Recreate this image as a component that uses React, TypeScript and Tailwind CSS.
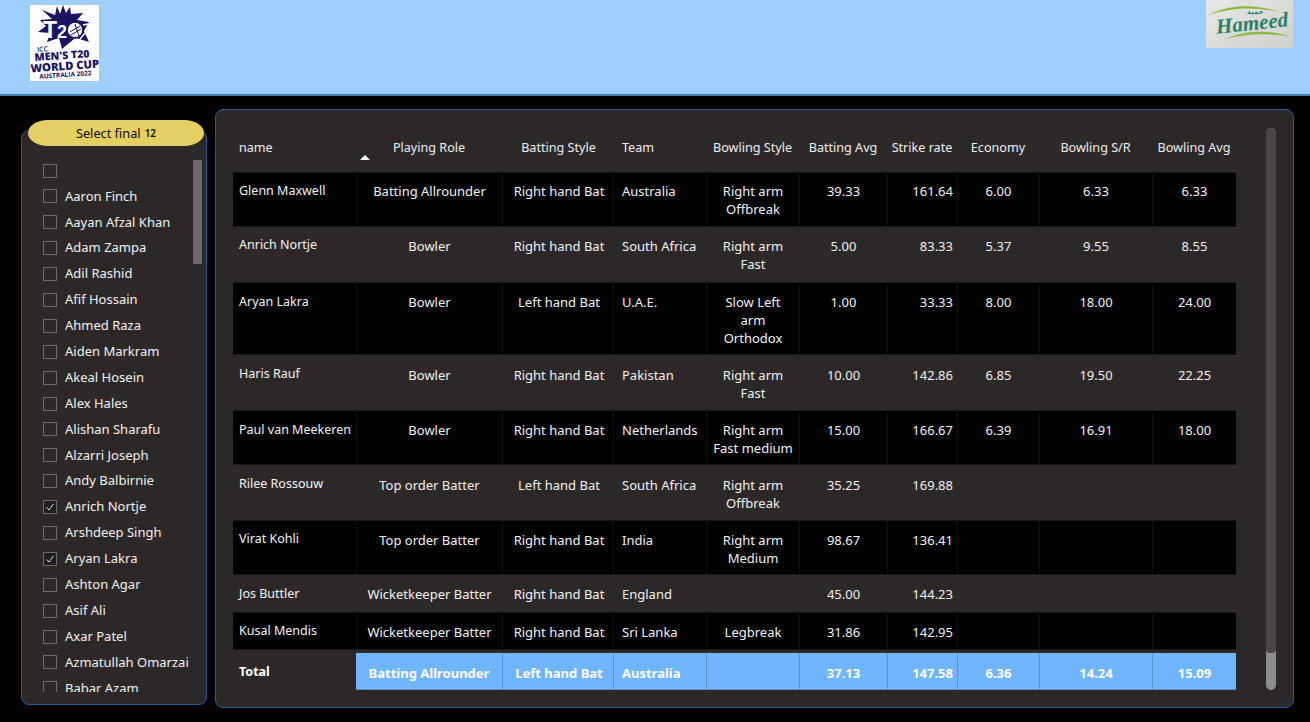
const grid = 'grid w-[1003px] grid-cols-[123px_146px_111px_93px_93px_88px_70px_82px_113px_84px]';

const players = [
  '',
  'Aaron Finch',
  'Aayan Afzal Khan',
  'Adam Zampa',
  'Adil Rashid',
  'Afif Hossain',
  'Ahmed Raza',
  'Aiden Markram',
  'Akeal Hosein',
  'Alex Hales',
  'Alishan Sharafu',
  'Alzarri Joseph',
  'Andy Balbirnie',
  'Anrich Nortje',
  'Arshdeep Singh',
  'Aryan Lakra',
  'Ashton Agar',
  'Asif Ali',
  'Axar Patel',
  'Azmatullah Omarzai',
  'Babar Azam',
];

const checked = ['Anrich Nortje', 'Aryan Lakra'];

const rows = [
  { h: 'h-[55px]', namePt: 'pt-[10px]', pt: 'pt-[10px]', cells: ['Glenn Maxwell', 'Batting Allrounder', 'Right hand Bat', 'Australia', 'Right arm\nOffbreak', '39.33', '161.64', '6.00', '6.33', '6.33'] },
  { h: 'h-[55px]', namePt: 'pt-[9px]', pt: 'pt-[10px]', cells: ['Anrich Nortje', 'Bowler', 'Right hand Bat', 'South Africa', 'Right arm\nFast', '5.00', '83.33', '5.37', '9.55', '8.55'] },
  { h: 'h-[73px]', namePt: 'pt-[11px]', pt: 'pt-[11px]', cells: ['Aryan Lakra', 'Bowler', 'Left hand Bat', 'U.A.E.', 'Slow Left\narm\nOrthodox', '1.00', '33.33', '8.00', '18.00', '24.00'] },
  { h: 'h-[55px]', namePt: 'pt-[10px]', pt: 'pt-[11px]', cells: ['Haris Rauf', 'Bowler', 'Right hand Bat', 'Pakistan', 'Right arm\nFast', '10.00', '142.86', '6.85', '19.50', '22.25'] },
  { h: 'h-[55px]', namePt: 'pt-[11px]', pt: 'pt-[11px]', cells: ['Paul van Meekeren', 'Bowler', 'Right hand Bat', 'Netherlands', 'Right arm\nFast medium', '15.00', '166.67', '6.39', '16.91', '18.00'] },
  { h: 'h-[55px]', namePt: 'pt-[10px]', pt: 'pt-[11px]', cells: ['Rilee Rossouw', 'Top order Batter', 'Left hand Bat', 'South Africa', 'Right arm\nOffbreak', '35.25', '169.88', '', '', ''] },
  { h: 'h-[55px]', namePt: 'pt-[10px]', pt: 'pt-[11px]', cells: ['Virat Kohli', 'Top order Batter', 'Right hand Bat', 'India', 'Right arm\nMedium', '98.67', '136.41', '', '', ''] },
  { h: 'h-[37px]', namePt: 'pt-[10px]', pt: 'pt-[10px]', cells: ['Jos Buttler', 'Wicketkeeper Batter', 'Right hand Bat', 'England', '', '45.00', '144.23', '', '', ''] },
  { h: 'h-[38px]', namePt: 'pt-[10px]', pt: 'pt-[11px]', cells: ['Kusal Mendis', 'Wicketkeeper Batter', 'Right hand Bat', 'Sri Lanka', 'Legbreak', '31.86', '142.95', '', '', ''] },
];

const headers = ['name', 'Playing Role', 'Batting Style', 'Team', 'Bowling Style', 'Batting Avg', 'Strike rate', 'Economy', 'Bowling S/R', 'Bowling Avg'];
const totals = ['Batting Allrounder', 'Left hand Bat', 'Australia', '', '37.13', '147.58', '6.36', '14.24', '15.09'];

// alignment per column
const align = [
  'text-left pl-[6px] text-[12.5px]',
  'text-center',
  'text-center pl-[2px]',
  'text-left pl-[8px]',
  'text-center',
  'text-center',
  'text-right pr-[4px]',
  'text-center',
  'text-center',
  'text-center',
];

const T20Logo = () => (
  <div className="w-[69px] h-[76px] bg-white relative overflow-hidden">
    <svg viewBox="0 0 69 46" className="w-[69px] h-[46px]">
      <polygon
        fill="#1b1464"
        points="27,1 30,9 33,0 36,8 40,2 41,9 53,8 47,15 59,17 54,26 59,37 43,32 44,34 32,44 29,33 17,37 20,28 8,27 16,21 10,15 22,14 12,5 25,10"
      />
      <text x="13" y="33" fontFamily="Liberation Sans, sans-serif" fontSize="23" fontWeight="700" fill="#fff">T</text>
      <text x="27" y="33" fontFamily="Liberation Sans, sans-serif" fontSize="18" fontWeight="700" fill="#fff">2</text>
      <circle cx="45" cy="25" r="8" fill="#fff" stroke="#1b1464" strokeWidth="1.6" />
      <path d="M40 27 L50 21 M41 30 L51 24 M45 19 L49 31" stroke="#1b1464" strokeWidth="1" />
      <path d="M53 20 L58 19 L56 27 L50 34" fill="none" stroke="#fff" strokeWidth="1.4" />
    </svg>
    <div className="absolute left-0 top-[40px] w-[69px] text-[#1b1464] font-['Open_Sans',sans-serif] font-extrabold -rotate-[4deg] whitespace-nowrap text-center">
      <div className="text-[7px] leading-[6px] font-semibold text-left pl-2">ICC</div>
      <div className="text-[10.5px] leading-[9px] -ml-1">MEN'S T20</div>
      <div className="text-[11.25px] leading-[11px]">WORLD CUP</div>
      <div className="text-[6.5px] leading-[8px] font-bold">AUSTRALIA 2022</div>
    </div>
  </div>
);

const HameedLogo = () => (
  <div className="w-[87px] h-[48px] bg-gradient-to-br from-[#e8e8e6] to-[#d0d0cd] relative overflow-hidden">
    <svg viewBox="0 0 87 48" className="absolute inset-0 w-full h-full">
      <path d="M2 15 C20 6 42 2 74 12 C44 6 24 8 2 15 Z" fill="#8db33c" />
      <path d="M19 39 C38 31 58 29 83 36 C58 33 38 34 19 39 Z" fill="#8db33c" />
    </svg>
    <div className="absolute left-[41px] top-[8px] font-['DejaVu_Sans',sans-serif] text-[7px] leading-[9px] font-bold text-[#2a7f6a]">حميد</div>
    <div className="absolute left-[8px] top-[11px] w-[76px] text-center font-['Liberation_Serif',serif] italic font-bold text-[21px] leading-[24px] text-[#2a7f6a] -rotate-6">
      Hameed
    </div>
  </div>
);

const Check = ({ on }: { on: boolean }) => (
  <span className={`w-[14px] h-[14px] shrink-0 border border-[#6f6b6b] flex items-center justify-center ${on ? 'bg-[#1f1d22]' : ''}`}>
    {on && (
      <svg viewBox="0 0 14 14" className="w-[14px] h-[14px]">
        <path d="M3 7.5 L5.8 10.5 L11 3.5" fill="none" stroke="#fff" strokeWidth="1" />
      </svg>
    )}
  </span>
);

const Slicer = () => (
  <div className="w-[186px] h-[575px] mt-[21px] shrink-0 bg-[#2d2828] border border-[#1c5c9c] rounded-lg relative">
    <div className="absolute left-[6px] top-[-11px] w-[176px] h-[26px] bg-[#e6cf62] rounded-[20px/13px] flex items-center justify-center pt-[1px] text-[#0c0c0c] text-[12.75px] font-['Noto_Sans',sans-serif]">
      Select final <span className="ml-1 text-[10px] font-semibold">12</span>
    </div>
    <div className="absolute right-[4px] top-[29px] w-[9px] h-[104px] bg-[#6e6868]" />
    <div className="h-[561px] pt-[26.6px] pl-[21px] overflow-hidden">
      {players.map(p => (
        <div key={p || 'blank'} className="h-[25.9px] flex items-center gap-[8px] text-[13px] text-[#f2f2f2] whitespace-nowrap">
          <Check on={checked.includes(p)} />
          <span>{p}</span>
        </div>
      ))}
    </div>
  </div>
);

const PlayerTable = () => (
  <div className="w-[1079px] h-[599px] shrink-0 bg-[#2d2828] border border-[#1c5c9c] rounded-lg relative pt-[20px] pl-[17px]">
    <div className={`${grid} h-[42px] text-[#eeeeee] text-[12.6px] relative`}>
      {headers.map((h, i) => (
        <div key={h} className={`${i === 0 ? 'text-left pl-[6px]' : i === 3 ? 'text-left pl-[9px]' : i === 2 ? 'text-center pl-[2px]' : 'text-center'} pt-[9px] whitespace-nowrap`}>
          {h}
        </div>
      ))}
      <span className="absolute left-[127px] top-[25px] w-0 h-0 border-l-[5px] border-r-[5px] border-b-[5px] border-l-transparent border-r-transparent border-b-white" />
    </div>
    {rows.map((r, idx) => (
      <div key={r.cells[0]} className={`${grid} ${r.h} ${idx % 2 === 0 ? 'bg-black border-y border-[#181616]' : ''} text-[13px] leading-[18px] text-[#f2f2f2]`}>
        {r.cells.map((c, i) => (
          <div
            key={i}
            className={`${align[i]} ${i === 0 ? r.namePt : r.pt} ${idx % 2 === 0 ? '-mt-px' : ''} ${i === 0 ? '' : idx % 2 === 0 ? 'border-l border-[#121010]' : 'border-l border-transparent'} whitespace-pre-line`}
          >
            {c}
          </div>
        ))}
      </div>
    ))}
    <div className={`${grid} h-[37px] mt-[3px] text-[13px] font-bold text-white`}>
      <div className="pl-[6px] pt-[10px] text-[12.5px]">Total</div>
      {totals.map((t, i) => (
        <div
          key={i}
          className={`${align[i + 1]} pt-[11px] bg-[#6fb6ff] border-b border-[#5a94cc] whitespace-nowrap ${i > 0 ? 'border-l' : ''}`}
        >
          {t}
        </div>
      ))}
    </div>
    <div className="absolute left-[1050px] top-[18px] w-[10px] h-[562px] rounded-[5px] bg-[#8f8c8c] overflow-hidden">
      <div className="h-[525px] bg-[#4a4646] rounded-b-[4px]" />
    </div>
  </div>
);

export default function App() {
  return (
    <div className="w-[1310px] h-[722px] bg-[#040002] overflow-hidden font-['Noto_Sans',sans-serif]">
      <header className="h-[96px] bg-[#9fcfff] border-b-2 border-[#3f7fb5] flex justify-between items-start pl-[30px] pr-[17px]">
        <div className="pt-[5px]">
          <T20Logo />
        </div>
        <HameedLogo />
      </header>
      <main className="flex items-start gap-[8px] pl-[21px] pt-[13px]">
        <Slicer />
        <PlayerTable />
      </main>
    </div>
  );
}
